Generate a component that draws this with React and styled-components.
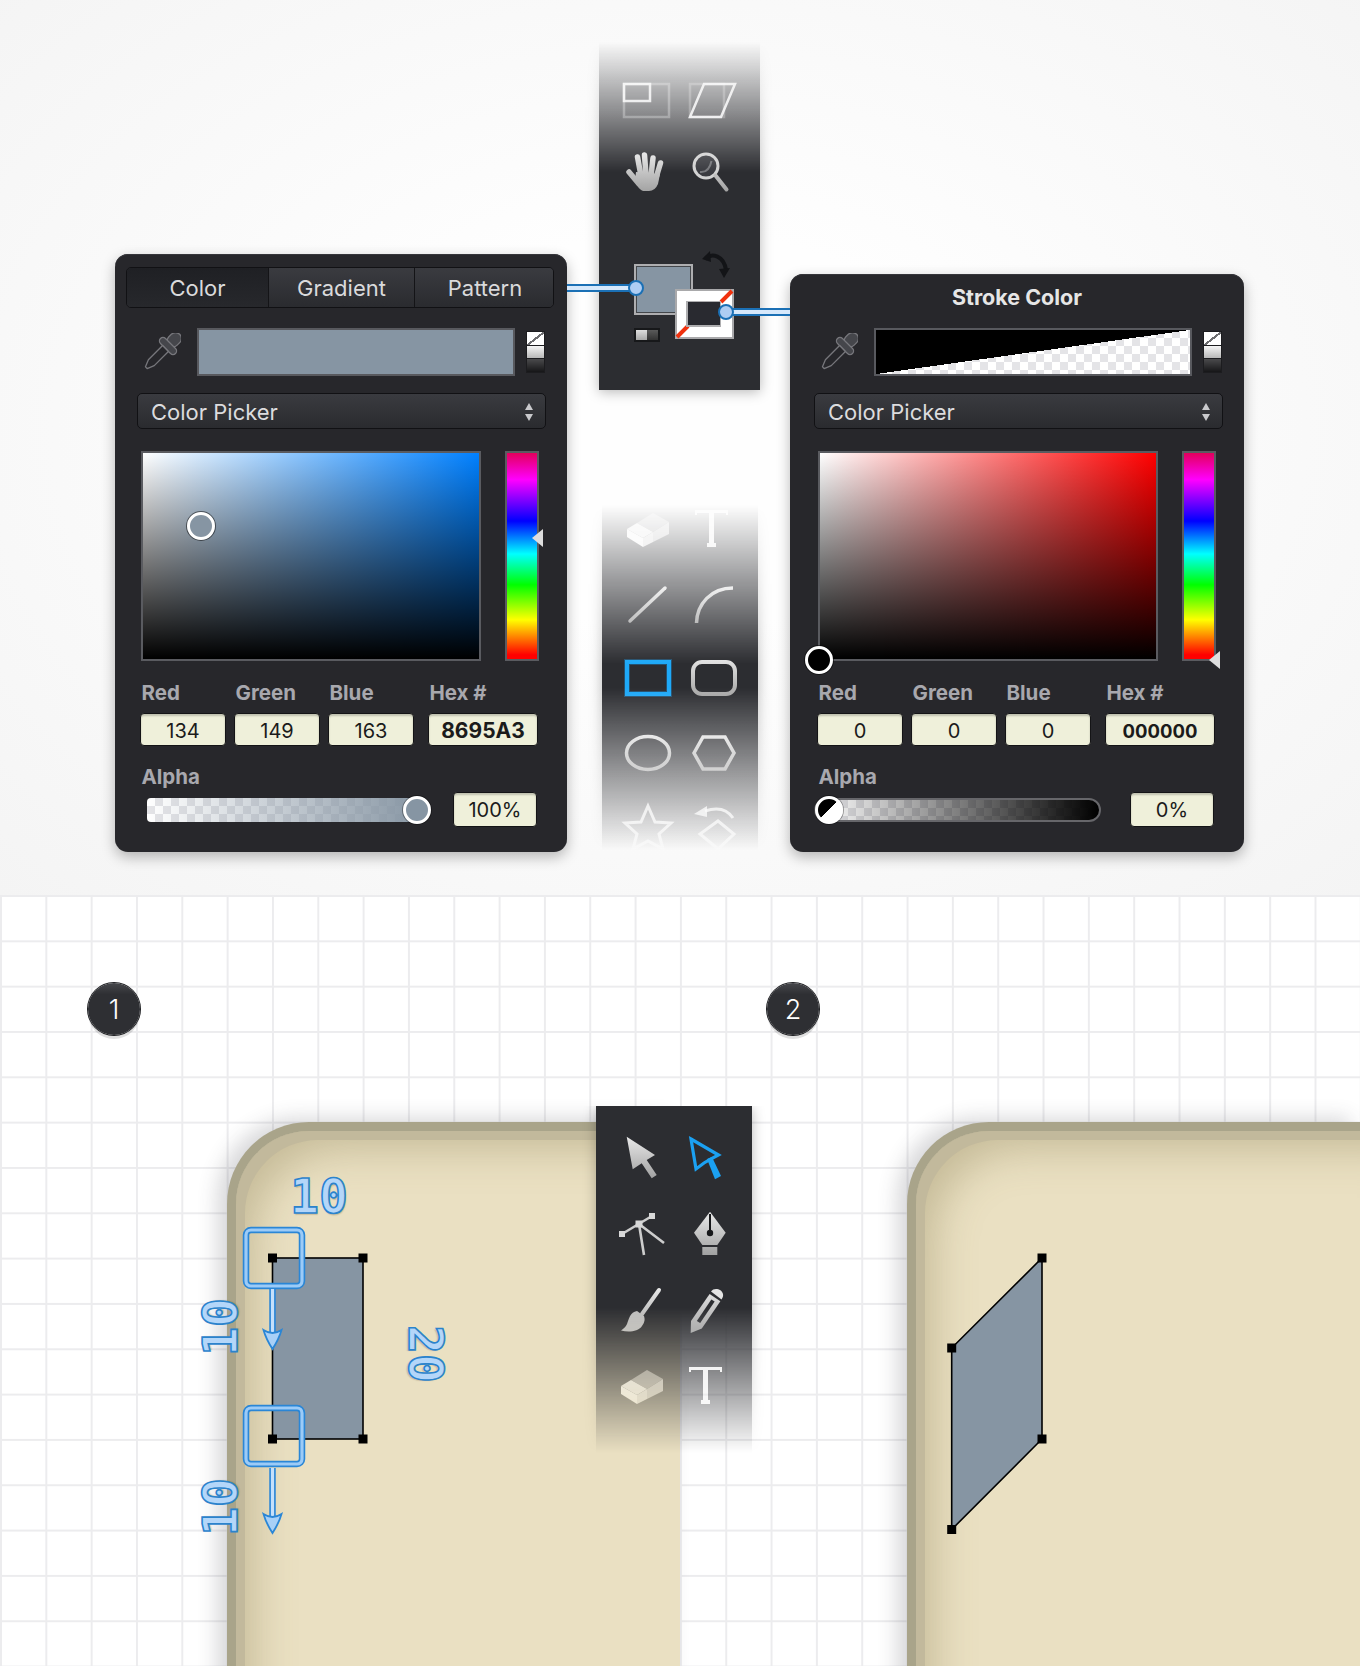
import React from 'react';
import styled, { createGlobalStyle } from 'styled-components';

const GlobalStyle = createGlobalStyle`
    html, body {
        margin: 0;
        padding: 0;
        background: #fff;
    }
    body {
        font-family: Inter, "Liberation Sans", sans-serif;
    }
`;

const checker = 'conic-gradient(#e4e4e7 25%, #fff 0 50%, #e4e4e7 0 75%, #fff 0) 0 0 / 16px 16px';

const Page = styled.div`
    width: 1360px;
    height: 1666px;
    overflow: hidden;
`;

const Defs = styled.svg`
    position: absolute;
    width: 0;
    height: 0;
`;

/* top half: the two colour panels and the toolbars between them */
const Showcase = styled.section`
    position: relative;
    box-sizing: border-box;
    height: 895px;
    display: flex;
    align-items: flex-end;
    padding: 0 0 43px 115px;
    background: radial-gradient(ellipse at 50% 48%, #fefefe 30%, #f4f4f4 100%);
`;

const Panel = styled.div`
    box-sizing: border-box;
    flex: none;
    width: ${(p) => p.$width}px;
    margin-left: ${(p) => p.$gap || 0}px;
    padding: ${(p) => p.$top}px 21px 25px ${(p) => p.$pad}px;
    background: #27272b;
    border-radius: 13px;
    box-shadow: 0 5px 14px rgba(0, 0, 0, 0.28), inset 0 1px 0 #36363b;
`;

const Tabs = styled.div`
    display: flex;
    height: 41px;
    margin: 0 -8px 20px -11px;
    box-sizing: border-box;
    border: 1px solid #111114;
    border-radius: 5px;
    overflow: hidden;
`;

const Tab = styled.div`
    width: ${(p) => p.$width}px;
    flex: none;
    box-sizing: border-box;
    display: flex;
    align-items: center;
    justify-content: center;
    font-size: 22px;
    color: #dadadc;
    border-right: 1px solid #141417;
    background: ${(p) => (p.$active ? 'linear-gradient(#1f2024, #27282c)' : 'linear-gradient(#3a3b40, #2a2b2f)')};
    &:last-child {
        border-right: none;
    }
`;

const PanelTitle = styled.div`
    height: 46px;
    margin-bottom: 8px;
    padding-right: 3px;
    line-height: 46px;
    text-align: center;
    font-size: 21.5px;
    font-weight: 700;
    color: #e6e6e6;
`;

const SwatchRow = styled.div`
    display: flex;
    height: 48px;
    align-items: center;
    margin-bottom: 17px;
`;

const Dropper = styled.svg`
    flex: none;
    width: 38px;
    height: 38px;
    margin: 0 16px 0 6px;
`;

const Swatch = styled.div`
    box-sizing: border-box;
    flex: none;
    width: 318px;
    height: 48px;
    border: 2px solid #58595e;
    background: ${(p) => p.$background};
`;

const MiniStack = styled.div`
    display: flex;
    flex-direction: column;
    gap: 1px;
    margin-left: 11px;
    padding: 1px;
    background: #1c1c1f;
`;

const MiniCell = styled.div`
    width: 17px;
    height: 12.5px;
    background: ${(p) => p.$background};
`;

const Select = styled.div`
    box-sizing: border-box;
    height: 36px;
    display: flex;
    align-items: center;
    justify-content: space-between;
    margin-bottom: 22px;
    padding: 1px 11px 0 13px;
    font-size: 22px;
    color: #dcdcde;
    border: 1px solid #111114;
    border-radius: 5px;
    background: linear-gradient(#3a3b40, #2a2b2f);
`;

const Stepper = styled.svg`
    width: 10px;
    height: 20px;
`;

const PickerRow = styled.div`
    display: flex;
    gap: 24px;
    margin: 0 0 22px 4px;
`;

const ColorField = styled.div`
    position: relative;
    box-sizing: border-box;
    width: 340px;
    height: 210px;
    border: 2px solid #5a5b60;
    background: linear-gradient(to top, #000, rgba(0, 0, 0, 0)), linear-gradient(to right, #fff, ${(p) => p.$hue});
`;

const FieldKnob = styled.div`
    position: absolute;
    left: ${(p) => p.$x - 2}px;
    top: ${(p) => p.$y - 2}px;
    width: 28px;
    height: 28px;
    box-sizing: border-box;
    margin: -14px 0 0 -14px;
    border: 3px solid #fff;
    border-radius: 50%;
    background: ${(p) => p.$color};
    box-shadow: 0 0 0 1px rgba(0, 0, 0, 0.5);
`;

const HueBar = styled.div`
    position: relative;
    box-sizing: border-box;
    width: 34px;
    height: 210px;
    border: 2px solid #5a5b60;
    background: linear-gradient(#e2005c 0%, #f0f 13%, #00f 33%, #0ff 49%, #0f0 64%, #ff0 81%, #f00 98%);
`;

const HueArrow = styled.div`
    position: absolute;
    right: -6px;
    top: ${(p) => p.$y - 2}px;
    margin-top: -9px;
    border-style: solid;
    border-width: 9px 11px 9px 0;
    border-color: transparent #dedede transparent transparent;
`;

const Fields = styled.div`
    display: flex;
    gap: 8px;
    margin: 0 0 21px 3px;
`;

const Field = styled.div`
    width: ${(p) => p.$width}px;
    margin-left: ${(p) => p.$shift || 0}px;
`;

const Label = styled.div`
    height: 20px;
    line-height: 20px;
    padding-left: ${(p) => p.$indent || 1.5}px;
    font-size: 20.5px;
    font-weight: 700;
    color: #a8a8ae;
`;

const Input = styled.div`
    box-sizing: border-box;
    height: 33px;
    margin-top: 10px;
    line-height: 34px;
    text-align: center;
    font-size: ${(p) => p.$size || 20}px;
    font-weight: ${(p) => (p.$bold ? 700 : 400)};
    color: #1b1b1b;
    background: #eff0da;
    border: 1.5px solid #141416;
    border-radius: 4px;
    box-shadow: inset 0 2px 2px rgba(0, 0, 0, 0.2);
`;

const AlphaRow = styled.div`
    display: flex;
    align-items: center;
    justify-content: space-between;
    margin: 5px 9px 0 ${(p) => p.$inset}px;
`;

const SliderTrack = styled.div`
    position: relative;
    box-sizing: border-box;
    width: ${(p) => p.$width}px;
    height: 24px;
    border-radius: ${(p) => (p.$opaque ? '12px' : '4px')};
    border: ${(p) => (p.$opaque ? '2px solid #66666a' : 'none')};
    background: linear-gradient(to right, rgba(${(p) => p.$rgb}, 0), rgba(${(p) => p.$rgb}, 1)), ${checker};
`;

const SliderKnob = styled.div`
    position: absolute;
    left: ${(p) => p.$x}px;
    top: 50%;
    width: 28px;
    height: 28px;
    box-sizing: border-box;
    margin: -14px 0 0 -14px;
    border: 3px solid #fff;
    border-radius: 50%;
    background: ${(p) => p.$background};
    box-shadow: 0 0 0 1px rgba(0, 0, 0, 0.35);
`;

const AlphaBox = styled(Input)`
    width: 84px;
    height: 35px;
    margin-top: 0;
    line-height: 34px;
`;

/* middle column with the two faded tool strips */
const ToolColumn = styled.div`
    flex: none;
    align-self: flex-start;
    width: 161px;
    margin-left: 32px;
    padding-top: 42px;
`;

const FadeTop = styled.div`
    margin: 0 -16px 99px;
    padding: 0 16px 16px;
    mask-image: linear-gradient(to bottom, transparent 0, #000 130px);
`;

const FadeMiddle = styled.div`
    margin: 0 -13px;
    padding: 0 16px;
    mask-image: linear-gradient(to bottom, transparent 0, #000 46%, #000 53%, transparent 100%);
`;

const FadeBottom = styled.div`
    position: absolute;
    left: 580px;
    top: 211px;
    padding: 0 16px;
    mask-image: linear-gradient(to bottom, #000 57%, transparent 98%);
`;

const Strip = styled.div`
    box-sizing: border-box;
    width: ${(p) => p.$width}px;
    height: ${(p) => p.$height}px;
    padding-top: ${(p) => p.$top}px;
    background: #2c2d31;
    box-shadow: 0 2px 12px rgba(0, 0, 0, 0.28);
`;

const ToolGrid = styled.div`
    display: grid;
    grid-template-columns: 65px 65px;
    grid-auto-rows: 48px;
    row-gap: ${(p) => p.$gap}px;
    justify-content: center;
    justify-items: center;
`;

const ToolIcon = styled.svg`
    width: 48px;
    height: 48px;
    overflow: visible;
`;

const ColorWell = styled.div`
    position: relative;
    width: 100px;
    height: 92px;
    margin: 54px 0 0 35px;
`;

const WellFill = styled.div`
    position: absolute;
    left: 0;
    top: 14px;
    box-sizing: border-box;
    width: 59px;
    height: 51px;
    border: 2px solid #aeaeb0;
    background: #8695a3;
    box-shadow: inset 0 0 0 1px #44474b;
`;

const WellStroke = styled.svg`
    position: absolute;
    left: 41px;
    top: 39px;
    width: 59px;
    height: 50px;
`;

const WellSwap = styled.svg`
    position: absolute;
    left: 68px;
    top: 0;
    width: 28px;
    height: 29px;
`;

const WellDefault = styled.div`
    position: absolute;
    left: 0;
    top: 78px;
    box-sizing: border-box;
    width: 26px;
    height: 14px;
    padding: 2px;
    display: flex;
    background: #17181a;
`;

const WellDefaultCell = styled.div`
    flex: 1;
    background: ${(p) => p.$background};
`;

const Connector = styled.div`
    position: absolute;
    left: ${(p) => p.$left}px;
    top: ${(p) => p.$top - 4}px;
    width: ${(p) => p.$width}px;
    height: 8px;
    box-sizing: border-box;
    border-top: 2px solid #1b70b5;
    border-bottom: 2px solid #1b70b5;
    background: #d6e8fb;
    &::after {
        content: '';
        position: absolute;
        top: -6px;
        ${(p) => p.$dot}: -8px;
        width: 16px;
        height: 16px;
        box-sizing: border-box;
        border: 2px solid #1b70b5;
        border-radius: 50%;
        background: #aecdf3;
    }
`;

/* bottom half: the artboards on the grid */
const Canvas = styled.section`
    position: relative;
    height: 771px;
    overflow: hidden;
    display: flex;
    gap: 227px;
    padding: 227px 0 0 227px;
    box-sizing: border-box;
    background-color: #fff;
    background-image: linear-gradient(to right, #ececee 1.5px, transparent 1.5px),
        linear-gradient(to bottom, #ececee 1.5px, transparent 1.5px);
    background-size: 45.33px 45.33px;
`;

const Artboard = styled.div`
    flex: none;
    box-sizing: border-box;
    width: 453px;
    height: 700px;
    background: #eae0c2;
    border-top: 9px solid #a9a48a;
    border-left: 9px solid #a9a48a;
    border-top-left-radius: 82px;
    box-shadow: -10px -4px 20px rgba(60, 60, 70, 0.2), inset 9px 9px 0 #c2b99c,
        inset 32px 32px 40px -14px rgba(130, 116, 72, 0.34);
`;

const Badge = styled.div`
    position: absolute;
    left: ${(p) => p.$x}px;
    top: 88px;
    width: 52px;
    height: 52px;
    display: flex;
    align-items: center;
    justify-content: center;
    font-size: 27px;
    font-weight: 300;
    color: #fff;
    border-radius: 50%;
    background: linear-gradient(#46474b, #2e2f33 22%);
    box-shadow: 0 0 0 1px #1d1e21, 0 4px 0 rgba(0, 0, 0, 0.12);
`;

const Diagram = styled.svg`
    position: absolute;
    left: 0;
    top: 0;
    width: 1360px;
    height: 771px;
`;

const Measure = styled.span`
    position: absolute;
    left: ${(p) => p.$x}px;
    top: ${(p) => p.$y}px;
    transform: translate(-50%, -50%) rotate(${(p) => p.$rotate || 0}deg);
    font-family: "DejaVu Sans Mono", "Liberation Mono", monospace;
    font-size: 48px;
    font-weight: 700;
    line-height: 1;
    color: #b4d6f9;
    -webkit-text-stroke: 1.6px #2b83cc;
    text-shadow: 1px 2px 1px rgba(120, 100, 60, 0.25);
`;

const Eyedropper = () => (
    <Dropper viewBox="0 0 38 38">
        <g transform="translate(25 13) rotate(45) scale(1.18)" stroke="#77777c" strokeWidth="1.1" strokeLinejoin="round">
            <rect x="-5" y="-14" width="10" height="13" rx="5" fill="#45464b" />
            <rect x="-9" y="-3" width="18" height="6" rx="3" fill="#45464b" />
            <path d="M-3.5 3 L3.5 3 L3.5 20 L1 26 L-1 26 L-3.5 20 Z" fill="#27272b" />
        </g>
    </Dropper>
);

const StackSwatch = () => (
    <MiniStack>
        <MiniCell $background="linear-gradient(to top left, #fff 44%, #6d6d70 44% 54%, #fff 54%)" />
        <MiniCell $background="linear-gradient(#f6f6f6, #b8b8b8)" />
        <MiniCell $background="linear-gradient(#4a4a4c, #161618)" />
    </MiniStack>
);

const ColorPanel = ({ head, width, gap, top, pad, swatch, hue, knob, knobColor, hueY, values, hex, hexSize, inset, track, sliderKnob, alpha, opaque, rgb }) => (
    <Panel $width={width} $gap={gap} $top={top} $pad={pad}>
        {head}
        <SwatchRow>
            <Eyedropper />
            <Swatch $background={swatch} />
            <StackSwatch />
        </SwatchRow>
        <Select>
            Color Picker
            <Stepper viewBox="0 0 10 20">
                <path d="M5 1 L9 8 L1 8 Z M5 19 L9 12 L1 12 Z" fill="#c9c9cc" />
            </Stepper>
        </Select>
        <PickerRow>
            <ColorField $hue={hue}>
                <FieldKnob $x={knob[0]} $y={knob[1]} $color={knobColor} />
            </ColorField>
            <HueBar>
                <HueArrow $y={hueY} />
            </HueBar>
        </PickerRow>
        <Fields>
            <Field $width={86}><Label>Red</Label><Input>{values[0]}</Input></Field>
            <Field $width={86}><Label>Green</Label><Input>{values[1]}</Input></Field>
            <Field $width={86}><Label>Blue</Label><Input>{values[2]}</Input></Field>
            <Field $width={110} $shift={6}><Label>Hex #</Label><Input $bold $size={hexSize}>{hex}</Input></Field>
        </Fields>
        <Label $indent={4.5}>Alpha</Label>
        <AlphaRow $inset={inset}>
            <SliderTrack $width={track} $opaque={opaque} $rgb={rgb}>
                <SliderKnob $x={sliderKnob[0]} $background={sliderKnob[1]} />
            </SliderTrack>
            <AlphaBox>{alpha}</AlphaBox>
        </AlphaRow>
    </Panel>
);

const Tool = ({ children }) => <ToolIcon viewBox="0 0 48 48">{children}</ToolIcon>;

const metal = 'url(#metal)';

const BoundsIcon = () => (
    <Tool>
        <rect x="1" y="7" width="45" height="33" fill="none" stroke="#fff" strokeOpacity="0.3" strokeWidth="2.5" />
        <rect x="1" y="7" width="26" height="17" fill="none" stroke="#fff" strokeOpacity="0.85" strokeWidth="2.5" />
    </Tool>
);

const SkewIcon = () => (
    <Tool>
        <rect x="2" y="7" width="34" height="33" fill="none" stroke="#fff" strokeOpacity="0.25" strokeWidth="2.5" />
        <path d="M2 40 L16 7 L47 7 L33 40 Z" fill="none" stroke="#fff" strokeOpacity="0.85" strokeWidth="2.5" />
    </Tool>
);

const HandIcon = () => (
    <Tool>
        <path d="M18 28 L14.5 9 M23 27 L21.5 7 M28 28 L30 10 M33 30 L37.5 15" stroke={metal} strokeWidth="5.5" strokeLinecap="round" />
        <path d="M6 24 L16 36" stroke={metal} strokeWidth="5.5" strokeLinecap="round" />
        <path d="M13 24 L37 26 L35 36 Q32 43 26 43 L20 43 Q15 41 12 33 Z" fill={metal} />
    </Tool>
);

const ZoomIcon = () => (
    <Tool>
        <circle cx="18" cy="18" r="12" fill="#3a3b40" stroke="#d2d2d2" strokeWidth="3" />
        <path d="M12 24 Q21 25 23.5 13" fill="none" stroke="#77787c" strokeWidth="2" />
        <path d="M27.5 27.5 L38.5 41.5" stroke={metal} strokeWidth="4" strokeLinecap="round" />
    </Tool>
);

const EraserIcon = () => (
    <Tool>
        <path d="M13 18 L29 8 L45 17 L29 27 Z" fill="#8e8e90" />
        <path d="M29 27 L45 17 L45 29 L29 37 Z" fill="#b5b5b6" />
        <path d="M3 24 L13 18 L29 27 L19 33 Z" fill="#e4e4e4" />
        <path d="M3 24 L19 33 L19 42 L3 32 Z" fill="#f4f4f4" />
        <path d="M19 33 L29 27 L29 37 L19 42 Z" fill="#d4d4d4" />
    </Tool>
);

const TypeIcon = () => (
    <Tool>
        <path d="M6 5 H39 V10 H37 V8 H25 V38 H27 V42 H18 V38 H20 V8 H8 V10 H6 Z" fill="#ececec" />
    </Tool>
);

const LineIcon = () => (
    <Tool>
        <path d="M6 41 L41 8" stroke={metal} strokeWidth="3.5" strokeLinecap="round" />
    </Tool>
);

const ArcIcon = () => (
    <Tool>
        <path d="M7.5 43 C8 24 22 8 44 8" fill="none" stroke={metal} strokeWidth="3.5" />
    </Tool>
);

const RectIcon = () => (
    <Tool>
        <rect x="3" y="8" width="42" height="32" fill="none" stroke="#19a6ff" strokeOpacity="0.3" strokeWidth="6" />
        <rect x="3" y="8" width="42" height="32" fill="none" stroke="#1ea9f8" strokeWidth="4" />
    </Tool>
);

const RoundRectIcon = () => (
    <Tool>
        <rect x="4" y="8" width="42" height="32" rx="9" fill="none" stroke={metal} strokeWidth="4" />
    </Tool>
);

const EllipseIcon = () => (
    <Tool>
        <ellipse cx="24" cy="24" rx="21.5" ry="16.5" fill="none" stroke={metal} strokeWidth="3.5" />
    </Tool>
);

const HexagonIcon = () => (
    <Tool>
        <path d="M5 24 L14 8 L36 8 L45 24 L36 40 L14 40 Z" fill="none" stroke={metal} strokeWidth="3.5" />
    </Tool>
);

const StarIcon = () => (
    <Tool>
        <path d="M24 3 L31 19 L47 20 L35 31 L39 46 L24 38 L9 46 L13 31 L1 20 L17 19 Z" fill="none" stroke="#fff" strokeOpacity="0.8" strokeWidth="3" />
    </Tool>
);

const RotateIcon = () => (
    <Tool>
        <path d="M29 18 L45 31 L29 46 L11 31 Z" fill="none" stroke="#fff" strokeOpacity="0.8" strokeWidth="3" />
        <path d="M44 15 C38 6 28 4 16 8" fill="none" stroke="#fff" strokeOpacity="0.8" strokeWidth="3" />
        <path d="M5 11 L18 3 L18 14 Z" fill="#fff" fillOpacity="0.8" />
    </Tool>
);

const SelectIcon = () => (
    <Tool>
        <path d="M8.7 2.7 L37 21 L28.7 26 L38.7 41 L33.7 44.3 L23.7 29.3 L14.7 35.3 Z" fill={metal} />
    </Tool>
);

const DirectSelectIcon = () => (
    <Tool>
        <path d="M8 5 L35.5 21 L26.7 25.6 L21 29 L13 35 Z" fill="none" stroke="#1ba1f2" strokeWidth="3.2" />
        <path d="M24 25 L29 23 L38 42 L32 45.3 Z" fill="#1ba1f2" />
    </Tool>
);

const AnchorIcon = () => (
    <Tool>
        <path d="M4 24 L34 6 M21 14 L26 45 M21 14 L46 33" stroke="#cdcdcd" strokeWidth="2.6" />
        <rect x="17.5" y="10.5" width="7" height="7" fill="#d8d8d8" />
        <rect x="1" y="21" width="6" height="6" fill="#d8d8d8" />
        <rect x="31" y="3" width="6" height="6" fill="#d8d8d8" />
    </Tool>
);

const PenIcon = () => (
    <Tool>
        <path d="M27 1.7 L42.7 22.7 L34.3 35 L19.3 35 L11 22.7 Z" fill={metal} />
        <path d="M27 4 V22" stroke="#17181a" strokeWidth="2" />
        <circle cx="27" cy="23" r="3.2" fill="#17181a" />
        <rect x="19.3" y="37" width="15" height="8" fill={metal} />
    </Tool>
);

const BrushIcon = () => (
    <Tool>
        <path d="M41 4 L24 28" stroke={metal} strokeWidth="4" strokeLinecap="round" />
        <path d="M19 25 C12 26 11 33 9 38 C8 41 5 43 3 44.5 C10 46.5 20 46 24 40 C27 36 27 33 26 30 Z" fill="#bdbdbd" />
    </Tool>
);

const PencilIcon = () => (
    <Tool>
        <path d="M7.7 47 L8 35.1 L26.6 7.9 L37.4 15.3 L18.8 42.5 Z" fill={metal} />
        <path d="M15.5 36 L30 14.5" stroke="#2c2d31" strokeWidth="4" />
        <path d="M28 5.5 C31 1 39 3 40 8 C40.5 10 39.5 12 38.5 13.5 Z" fill="#e4e4e4" />
    </Tool>
);

const Annotation = ({ x, y }) => (
    <g fill="none">
        <rect x={x + 3} y={y + 3} width="56" height="56" rx="5" stroke="#2a86d6" strokeWidth="6.5" />
        <rect x={x + 3} y={y + 3} width="56" height="56" rx="5" stroke="#9ccbf7" strokeWidth="3.2" />
    </g>
);

const DownArrow = ({ from, to }) => (
    <g>
        <path d={`M272.5 ${from} V${to - 8}`} stroke="#2a86d6" strokeWidth="6.5" />
        <path d={`M272.5 ${from} V${to - 8}`} stroke="#c5e0fb" strokeWidth="3.2" />
        <path
            d={`M263.5 ${to - 19} Q268 ${to - 16} 272.5 ${to - 16} Q277 ${to - 16} 281.5 ${to - 19} Q279 ${to - 10} 272.5 ${to} Q266 ${to - 10} 263.5 ${to - 19} Z`}
            fill="#a8d0f7"
            stroke="#2a86d6"
            strokeWidth="1.8"
        />
    </g>
);

const Anchors = ({ points }) => points.map(([x, y]) => <rect key={`${x}-${y}`} x={x - 4.5} y={y - 4.5} width="9" height="9" fill="#000" />);

const rectPoints = [[272.5, 1258], [363, 1258], [363, 1439], [272.5, 1439]];
const skewPoints = [[951.7, 1348], [1042, 1258], [1042, 1439], [951.7, 1529.5]];

const App = () => (
    <Page>
        <GlobalStyle />
        <Defs>
            <defs>
                <linearGradient id="metal" gradientUnits="userSpaceOnUse" x1="0" y1="4" x2="0" y2="44">
                    <stop offset="0" stopColor="#e6e6e6" />
                    <stop offset="1" stopColor="#a2a2a2" />
                </linearGradient>
            </defs>
        </Defs>

        <Showcase>
            <ColorPanel
                head={
                    <Tabs>
                        <Tab $width={142} $active>Color</Tab>
                        <Tab $width={146}>Gradient</Tab>
                        <Tab $width={140}>Pattern</Tab>
                    </Tabs>
                }
                width={452}
                top={13}
                pad={22}
                swatch="#8695a3"
                hue="#0080ff"
                knob={[60, 75]}
                knobColor="#8695a3"
                hueY={87}
                values={[134, 149, 163]}
                hex="8695A3"
                hexSize={21}
                inset={10}
                track={278}
                sliderKnob={[270, '#8695a3']}
                alpha="100%"
                rgb="134, 149, 163"
            />

            <ToolColumn>
                <FadeTop>
                    <Strip $width={161} $height={348} $top={35}>
                        <ToolGrid $gap={23}>
                            <BoundsIcon />
                            <SkewIcon />
                            <HandIcon />
                            <ZoomIcon />
                        </ToolGrid>
                        <ColorWell>
                            <WellSwap viewBox="0 0 28 29">
                                <path d="M3 9 C10 2 22 6 24 20" fill="none" stroke="#131417" strokeWidth="4" />
                                <path d="M0 9 L8 1 L9 12 Z M17 19 L28 18 L22 28 Z" fill="#131417" />
                            </WellSwap>
                            <WellFill />
                            <WellStroke viewBox="0 0 59 50">
                                <rect width="59" height="50" fill="#a9a9ab" />
                                <rect x="2" y="2" width="55" height="46" fill="#fff" />
                                <path d="M2 48 L13 37 M57 2 L46 13" stroke="#f0320f" strokeWidth="4" />
                                <rect x="11" y="12" width="35" height="26" fill="#aeaeb0" />
                                <rect x="13" y="13" width="32" height="23" fill="#292a30" />
                            </WellStroke>
                            <WellDefault>
                                <WellDefaultCell $background="linear-gradient(#dedede, #a8a8a8)" />
                                <WellDefaultCell $background="linear-gradient(#5a5a5a, #333)" />
                            </WellDefault>
                        </ColorWell>
                    </Strip>
                </FadeTop>
                <FadeMiddle>
                    <Strip $width={156} $height={345} $top={0}>
                        <ToolGrid $gap={26.5}>
                            <EraserIcon />
                            <TypeIcon />
                            <LineIcon />
                            <ArcIcon />
                            <RectIcon />
                            <RoundRectIcon />
                            <EllipseIcon />
                            <HexagonIcon />
                            <StarIcon />
                            <RotateIcon />
                        </ToolGrid>
                    </Strip>
                </FadeMiddle>
            </ToolColumn>

            <ColorPanel
                head={<PanelTitle>Stroke Color</PanelTitle>}
                width={454}
                gap={30}
                top={0}
                pad={24}
                swatch={`linear-gradient(to bottom right, #000 50%, transparent 50%), ${checker}`}
                hue="#ff0000"
                knob={[1, 209]}
                knobColor="#000"
                hueY={209}
                values={[0, 0, 0]}
                hex="000000"
                hexSize={18.5}
                inset={0}
                track={287}
                sliderKnob={[13, 'linear-gradient(135deg, #000 50%, #fff 50%)']}
                alpha="0%"
                opaque
                rgb="0, 0, 0"
            />

            <Connector $left={567} $top={288} $width={69} $dot="right" />
            <Connector $left={726} $top={312} $width={64} $dot="left" />
        </Showcase>

        <Canvas>
            <Artboard />
            <Artboard />
            <Badge $x={88}>1</Badge>
            <Badge $x={767}>2</Badge>
            <Diagram viewBox="0 895 1360 771">
                <rect x="272.5" y="1258" width="90.5" height="181" fill="#8695a3" stroke="#000" strokeWidth="1.6" />
                <Anchors points={rectPoints} />
                <path d="M951.7 1348 L1042 1258 L1042 1439 L951.7 1529.5 Z" fill="#8695a3" stroke="#000" strokeWidth="1.6" />
                <Anchors points={skewPoints} />
                <Annotation x={243} y={1227} />
                <Annotation x={243} y={1405} />
                <DownArrow from={1289} to={1349} />
                <DownArrow from={1468} to={1533} />
            </Diagram>
            <Measure $x={319} $y={301}>10</Measure>
            <Measure $x={220} $y={432} $rotate={-90}>10</Measure>
            <Measure $x={220} $y={612} $rotate={-90}>10</Measure>
            <Measure $x={426} $y={459} $rotate={90}>20</Measure>
            <FadeBottom>
                <Strip $width={156} $height={354} $top={28}>
                    <ToolGrid $gap={28}>
                        <SelectIcon />
                        <DirectSelectIcon />
                        <AnchorIcon />
                        <PenIcon />
                        <BrushIcon />
                        <PencilIcon />
                        <EraserIcon />
                        <TypeIcon />
                    </ToolGrid>
                </Strip>
            </FadeBottom>
        </Canvas>
    </Page>
);

export default App;
